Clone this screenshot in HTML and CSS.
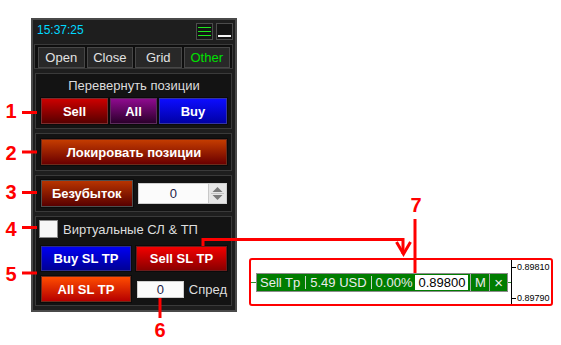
FILE: index.html
```html
<!DOCTYPE html>
<html lang="ru">
  <head>
    <meta charset="UTF-8" />
    <meta name="viewport" content="width=device-width, initial-scale=1.0" />
    <title>Trade Panel - Other</title>
    <link rel="stylesheet" href="styles.css">
  </head>

  <body>
    <div class="stage">
      <div class="panel">
        <div class="titlebar">
          <span class="clock">15:37:25</span>
          <div class="win-btns">
            <span class="win-btn menu"><i></i><i></i><i></i></span>
            <span class="win-btn minimize"><i></i></span>
          </div>
        </div>

        <div class="tabs">
          <button class="tab">Open</button>
          <button class="tab">Close</button>
          <button class="tab">Grid</button>
          <button class="tab active">Other</button>
        </div>

        <div class="group reverse">
          <div class="group-title">Перевернуть позиции</div>
          <div class="reverse-row">
            <button class="btn sell">Sell</button>
            <button class="btn all">All</button>
            <button class="btn buy">Buy</button>
          </div>
        </div>

        <div class="group lock">
          <button class="btn lock-btn">Локировать позиции</button>
        </div>

        <div class="group breakeven">
          <button class="btn be-btn">Безубыток</button>
          <div class="spin">
            <span class="spin-value">0</span>
            <span class="spin-arrows">
              <svg width="17" height="19" viewBox="0 0 17 19">
                <path d="M3.5 8 L8.5 3 L13.5 8 Z" fill="#7a7a7a" />
                <line x1="2" y1="9.5" x2="15" y2="9.5" stroke="#c4c4c4" />
                <path d="M3.5 11 L8.5 16 L13.5 11 Z" fill="#7a7a7a" />
              </svg>
            </span>
          </div>
        </div>

        <div class="group virtual">
          <label class="check"><span class="check-box"></span>Виртуальные СЛ &amp; ТП</label>
          <div class="sl-row">
            <button class="btn buy-sl">Buy SL TP</button>
            <button class="btn sell-sl">Sell SL TP</button>
          </div>
          <div class="sl-row spread-row">
            <button class="btn all-sl">All SL TP</button>
            <span class="field">0</span>
            <span class="field-label">Спред</span>
          </div>
        </div>
      </div>

      <!-- chart fragment the arrow points at -->
      <div class="callout">
        <div class="plot">
          <div class="pl-bar">
            <span class="pl-seg first">Sell Tp</span>
            <span class="pl-seg sep">5.49 USD</span>
            <span class="pl-seg sep pct">0.00%</span>
            <span class="pl-price">0.89800</span>
            <span class="pl-btn">M</span>
            <span class="pl-btn close">&times;</span>
          </div>
        </div>
        <div class="scale">
          <span class="tick">0.89810</span>
          <span class="tick">0.89790</span>
        </div>
      </div>

      <!-- annotation marks -->
      <svg class="marks" width="561" height="345" viewBox="0 0 561 345">
        <g stroke="#ff0000" stroke-width="3" fill="none">
          <line x1="22" y1="112.5" x2="37" y2="112.5" />
          <line x1="22" y1="152" x2="37" y2="152" />
          <line x1="22" y1="192.5" x2="37" y2="192.5" />
          <line x1="22" y1="227.5" x2="37" y2="227.5" />
          <line x1="22" y1="273" x2="37" y2="273" />
          <line x1="160" y1="298" x2="160" y2="318" />
          <line x1="415" y1="219" x2="415" y2="273" />
          <polyline points="203,246 203,239.5 403,239.5 403,254" />
          <polyline points="396.5,242 403.5,254 410.5,242" />
        </g>
      </svg>
      <span class="num n1">1</span>
      <span class="num n2">2</span>
      <span class="num n3">3</span>
      <span class="num n4">4</span>
      <span class="num n5">5</span>
      <span class="num n6">6</span>
      <span class="num n7">7</span>
    </div>
  </body>
</html>
```

FILE: styles.css
```css
body {
  margin: 0;
  background: #ffffff;
  font-family: "Liberation Sans", Arial, sans-serif;
}

.stage {
  position: relative;
  width: 561px;
  height: 345px;
  overflow: hidden;
}

/* panel */

.panel {
  width: 206px;
  height: 294px;
  margin: 18px 0 0 31px;
  box-sizing: border-box;
  border: 2px solid #4a4a4a;
  background: #1e1e1e;
  padding: 0 2px 0 1px;
  display: flex;
  flex-direction: column;
}

.titlebar {
  height: 24px;
  box-sizing: border-box;
  padding: 3px 0 0 3px;
  display: flex;
  justify-content: space-between;
  align-items: flex-start;
}

.clock {
  color: #00d8ff;
  font-size: 12px;
  line-height: 14px;
}

.win-btns {
  display: flex;
  gap: 3px;
}

.win-btn {
  width: 17px;
  height: 17px;
  box-sizing: border-box;
  border: 1px solid #4c4c4c;
  background: #141414;
  display: flex;
  flex-direction: column;
  padding: 0 1px;
}

.menu {
  justify-content: center;
  gap: 3px;
}

.menu i {
  height: 1px;
  background: #1ee61e;
}

.minimize {
  justify-content: flex-end;
  padding-bottom: 2px;
}

.minimize i {
  height: 2px;
  background: #f4f4f4;
}

.tabs {
  border: 1px solid #3a3a3a;
  background: #0e0e0e;
  padding: 2px 2px 0 3px;
  display: grid;
  grid-template-columns: repeat(4, 1fr);
  gap: 2px;
}

.tab {
  height: 21px;
  padding: 0;
  border: 1px solid #474747;
  background: #282828;
  color: #e2e2e2;
  font-family: inherit;
  font-size: 13px;
}

.tab.active {
  color: #00e000;
}

.group {
  margin: 4px 1px 0;
  border: 1px solid #3a3a3a;
  background: #131313;
  padding: 4px 4px 4px 5px;
}

.group-title {
  color: #dcdcdc;
  font-size: 13px;
  line-height: 16px;
  text-align: center;
  margin-bottom: 4px;
}

/* buttons */

.btn {
  padding: 0;
  border: 1px solid #555;
  color: #ffffff;
  font-family: inherit;
  font-size: 13px;
  font-weight: bold;
  box-shadow: 0 0 0 1px #0b0b0b;
}

.reverse-row {
  display: grid;
  grid-template-columns: 67px 47px 1fr;
  gap: 2px;
}

.reverse-row .btn {
  height: 26px;
}

.sell {
  background: linear-gradient(#cc0000, #580000);
  border-color: #7c2c2c;
}

.all {
  background: linear-gradient(#8e0a8e, #2c002c);
  border-color: #5c2c5c;
}

.buy {
  background: linear-gradient(#0c0cff, #0000a6);
  border-color: #3434a4;
}

.lock {
  padding-top: 5px;
  padding-bottom: 5px;
}

.lock-btn {
  width: 100%;
  height: 26px;
  background: linear-gradient(#c43c00, #6a0000);
  border-color: #6c2c1c;
}

.breakeven {
  display: flex;
  align-items: center;
}

.be-btn {
  width: 92px;
  height: 27px;
  background: linear-gradient(#b83400, #580000);
  border-color: #4e4e4e;
}

.spin {
  margin-left: 5px;
  width: 90px;
  height: 21px;
  box-sizing: border-box;
  border: 1px solid #cfcfcf;
  background: #fbfbfb;
  display: flex;
}

.spin-value {
  flex: 1;
  text-align: center;
  color: #1c1c48;
  font-size: 13px;
  line-height: 19px;
}

.spin-arrows {
  width: 17px;
  border-left: 1px solid #c8c8c8;
  background: #e6e6e6;
  display: flex;
}

.virtual {
  padding-top: 3px;
  padding-bottom: 3px;
}

.check {
  display: flex;
  align-items: center;
  gap: 5px;
  margin-left: -2px;
  color: #dedede;
  font-size: 13px;
  height: 18px;
}

.check-box {
  width: 19px;
  height: 18px;
  box-sizing: border-box;
  border: 1px solid #8a8a8a;
  background: #f6f6f6;
}

.sl-row {
  display: flex;
  gap: 5px;
  margin-top: 8px;
}

.sl-row .btn {
  width: 90px;
  height: 25px;
}

.sl-row .sell-sl {
  width: 91px;
}

.buy-sl {
  background: linear-gradient(#0000f2, #000096);
  border-color: #2c2c8c;
}

.sell-sl {
  background: linear-gradient(#f40000, #8a0000);
  border-color: #6c1c1c;
}

.spread-row {
  margin-top: 5px;
  align-items: center;
  gap: 0;
}

.spread-row .btn {
  height: 26px;
}

.all-sl {
  background: linear-gradient(#ff4c00, #b60000);
  border-color: #6c2c1c;
}

.field {
  margin-left: 6px;
  width: 47px;
  height: 17px;
  box-sizing: border-box;
  border: 1px solid #cfcfcf;
  background: #fbfbfb;
  color: #1c1c48;
  text-align: center;
  font-size: 13px;
  line-height: 15px;
}

.field-label {
  margin-left: 5px;
  color: #dedede;
  font-size: 13px;
}

/* chart callout */

.callout {
  position: absolute;
  left: 249px;
  top: 258px;
  width: 304px;
  height: 48px;
  box-sizing: border-box;
  border: 2px solid #ff0000;
  border-radius: 3px;
  background: #ffffff;
  display: flex;
}

.plot {
  width: 260px;
  box-sizing: border-box;
  padding-left: 5px;
  display: flex;
  align-items: center;
  background: linear-gradient(#2e8f2e, #2e8f2e) no-repeat 0 50% / 100% 1px;
}

.pl-bar {
  width: 252px;
  height: 19px;
  box-sizing: border-box;
  border: 1px solid #8c8c8c;
  background: #007d00;
  color: #ececec;
  font-size: 13px;
  line-height: 17px;
  display: flex;
}

.pl-seg {
  padding: 0 4px 0 5px;
}

.pl-seg.first {
  padding-left: 3px;
  padding-right: 5px;
}

.pl-seg.sep {
  background: linear-gradient(#c8d8c8, #c8d8c8) no-repeat 0 50% / 1px 13px;
}

.pl-seg.pct {
  padding-right: 3px;
}

.pl-price {
  margin: 1px 0;
  padding: 0 3px;
  background: #ffffff;
  color: #000000;
  line-height: 15px;
}

.pl-btn {
  margin-left: 2px;
  width: 18px;
  border-left: 1px solid #a8a8a8;
  text-align: center;
}

.pl-btn.close {
  margin-left: 0;
  flex: 1;
  font-size: 15px;
}

.scale {
  flex: 1;
  border-left: 1px solid #000000;
  padding-top: 1px;
  display: flex;
  flex-direction: column;
  justify-content: space-between;
  font-size: 9px;
  line-height: 12px;
  color: #000000;
}

.tick {
  display: flex;
  align-items: center;
  gap: 1px;
}

.tick::before {
  content: "";
  width: 4px;
  height: 1px;
  background: #000000;
}

/* annotations */

.marks {
  position: absolute;
  left: 0;
  top: 0;
  pointer-events: none;
}

.num {
  position: absolute;
  width: 14px;
  text-align: center;
  color: #ff0000;
  font-size: 20px;
  font-weight: bold;
  line-height: 20px;
}

.n1 { left: 4px; top: 101px; }
.n2 { left: 4px; top: 143px; }
.n3 { left: 4px; top: 182px; }
.n4 { left: 4px; top: 219px; }
.n5 { left: 4px; top: 264px; }
.n6 { left: 153px; top: 320px; }
.n7 { left: 409px; top: 195px; }
```
